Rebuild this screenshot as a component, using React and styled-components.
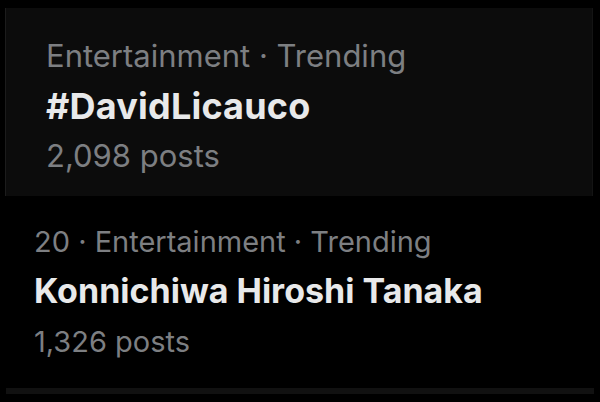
import React from "react";
import styled, { createGlobalStyle } from "styled-components";

const Global = createGlobalStyle`
  html, body { margin: 0; padding: 0; background: #000; }
  body { font-family: Inter, "Noto Sans", sans-serif; -webkit-font-smoothing: antialiased; }
`;

const Page = styled.div`
  width: 600px;
  height: 402px;
  background: #000;
  display: flex;
  flex-direction: column;
  padding-top: 8px;
  box-sizing: border-box;
  overflow: hidden;
`;

const TopCard = styled.div`
  margin: 0 7px 0 5px;
  height: 188px;
  box-sizing: border-box;
  background: #0c0c0c;
  border-left: 1px solid #1c1c1c;
  border-right: 1px solid #141414;
  padding: 23px 0 0 40px;
  display: flex;
  flex-direction: column;
`;

const PlainCard = styled.div`
  height: 192px;
  box-sizing: border-box;
  padding: 21px 0 0 34px;
  display: flex;
  flex-direction: column;
`;

const Strip = styled.div`
  margin: 0 6px 0 6px;
  height: 6px;
  background: #111;
`;

const Meta = styled.div`
  font-size: ${(p) => p.$size}px;
  line-height: ${(p) => p.$lh || 50}px;
  color: #7d7f82;
  white-space: nowrap;
`;

const Title = styled.div`
  font-size: ${(p) => p.$size}px;
  line-height: ${(p) => p.$lh}px;
  font-weight: 700;
  letter-spacing: ${(p) => p.$ls}px;
  color: #e8e9ea;
  white-space: nowrap;
`;

function Trend({ Card, size, titleSize, titleLh, titleLs, postsLh, meta, title, posts }) {
  return (
    <Card>
      <Meta $size={size}>{meta}</Meta>
      <Title $size={titleSize} $lh={titleLh} $ls={titleLs}>{title}</Title>
      <Meta $size={size} $lh={postsLh}>{posts}</Meta>
    </Card>
  );
}

export default function App() {
  return (
    <Page>
      <Global />
      <Trend
        Card={TopCard}
        size={31}
        titleSize={36}
        titleLh={50}
        titleLs={0.2}
        meta="Entertainment · Trending"
        title="#DavidLicauco"
        posts="2,098 posts"
      />
      <Trend
        Card={PlainCard}
        size={29}
        titleSize={34}
        titleLh={48}
        titleLs={0}
        postsLh={54}
        meta="20 · Entertainment · Trending"
        title="Konnichiwa Hiroshi Tanaka"
        posts="1,326 posts"
      />
      <Strip />
    </Page>
  );
}
